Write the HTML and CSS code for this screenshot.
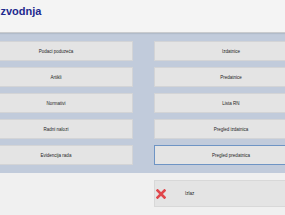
FILE: index.html
```html
<!DOCTYPE html>
<html lang="hr">
<head>
<meta charset="utf-8">
<title>Proizvodnja</title>
<link rel="stylesheet" href="styles.css">
</head>
<body>
<div class="window">
  <header class="header">
    <h1 class="title">Proizvodnja</h1>
  </header>
  <main class="panel">
    <button class="btn">Podaci poduzeća</button>
    <button class="btn">Izdatnice</button>
    <button class="btn">Artikli</button>
    <button class="btn">Predatnice</button>
    <button class="btn">Normativi</button>
    <button class="btn">Lista RN</button>
    <button class="btn">Radni nalozi</button>
    <button class="btn">Pregled izdatnica</button>
    <button class="btn">Evidencija rada</button>
    <button class="btn btn-focus">Pregled predatnica</button>
  </main>
  <footer class="footer">
    <button class="btn btn-exit">
      <svg class="exit-icon" viewBox="0 0 10 10" width="10" height="10" aria-hidden="true">
        <path d="M1.5 1.5 L8.5 8.5 M8.5 1.5 L1.5 8.5" stroke="#e0474c" stroke-width="2.6" stroke-linecap="square" fill="none"/>
      </svg>
      <span class="exit-label">Izlaz</span>
    </button>
  </footer>
</div>
</body>
</html>
```

FILE: styles.css
```css
html, body {
  margin: 0;
  padding: 0;
}
body {
  width: 285px;
  height: 215px;
  overflow: hidden;
  background: #f0f0f0;
  font-family: "Liberation Sans", Arial, sans-serif;
}
.window {
  margin-left: -42px;
  width: 371px;
}
.header {
  height: 33px;
  background: #f4f4f4;
  border-bottom: 1px solid #c9cbce;
  box-shadow: 0 1px 1px rgba(0,0,0,0.08);
  padding-left: 21px;
  box-sizing: border-box;
  position: relative;
}
.title {
  margin: 0;
  padding-top: 5px;
  font-size: 11px;
  line-height: 13px;
  font-weight: bold;
  color: #1e2a8e;
}
.panel {
  background: #c1cbdb;
  padding: 8px 21px 8px 21px;
  display: grid;
  grid-template-columns: 154px 154px;
  column-gap: 21px;
  row-gap: 6px;
}
.btn {
  height: 20px;
  margin: 0;
  padding: 0;
  background: #e4e4e4;
  border: 1px solid #d3d4d6;
  box-sizing: border-box;
  font-family: "Liberation Sans", Arial, sans-serif;
  font-size: 4.5px;
  font-weight: normal;
  color: #1e1e1e;
  text-align: center;
}
.btn-focus {
  border-color: #6e94c4;
}
.footer {
  padding: 7px 0 0 196px;
}
.btn-exit {
  width: 154px;
  height: 27px;
  display: flex;
  align-items: center;
  padding-left: 1px;
  border-color: #d8d8d8;
}
.exit-icon {
  display: block;
}
.exit-label {
  margin-left: 19px;
}
```
